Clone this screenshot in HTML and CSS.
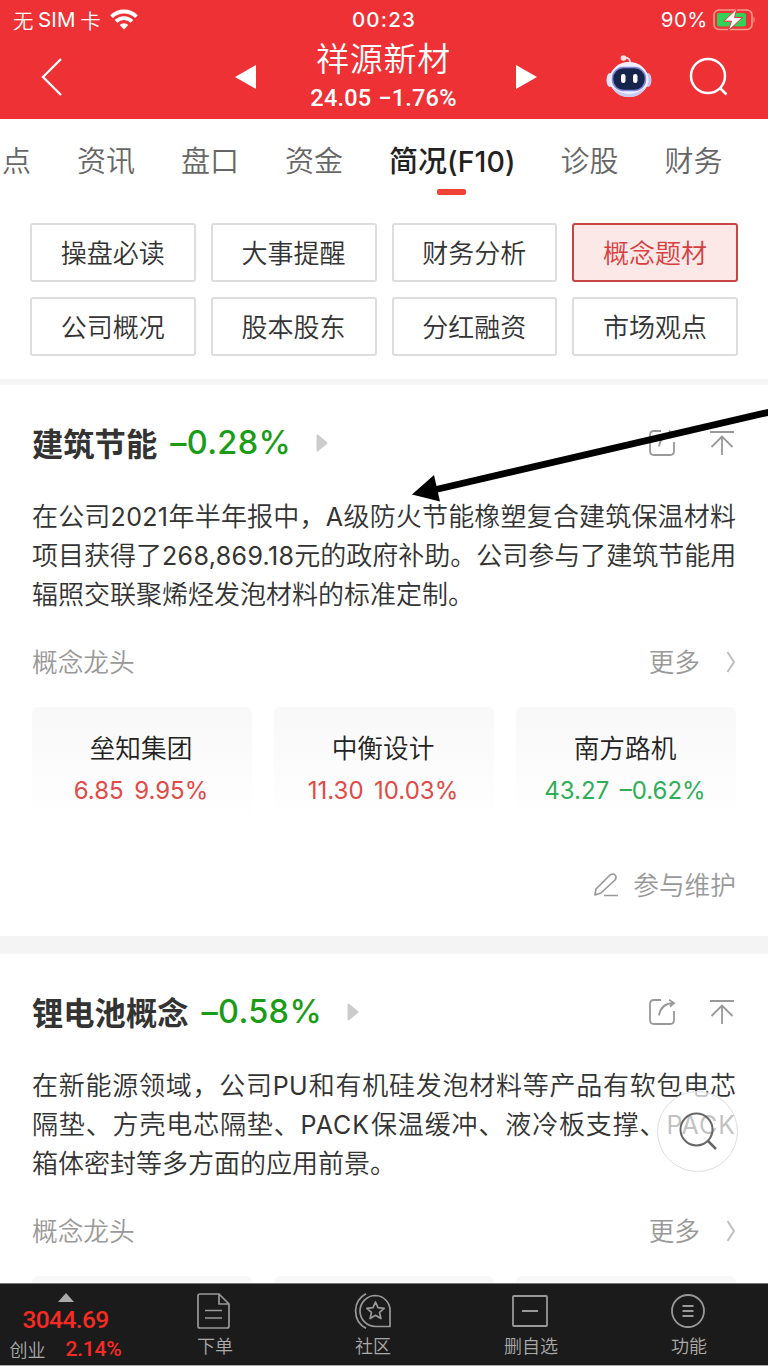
FILE: index.html
```html
<!DOCTYPE html>
<html lang="zh-CN">
<head>
<meta charset="utf-8">
<title>祥源新材</title>
<link rel="stylesheet" href="styles.css">
</head>
<body>
<div class="app">
  <header class="header">
    <div class="status">
      <div class="carrier"><span class="cjk">无</span><span class="sim">SIM</span><span class="cjk">卡</span>
        <svg class="wifi" width="28" height="21" viewBox="0 0 28 21"><g fill="none" stroke="#fff" stroke-width="3.900"><path d="M1.500 7.600a18 18 0 0 1 25 0"/><path d="M6 12.400a11.500 11.500 0 0 1 16 0"/></g><path d="M14 20.500l-4.300-4.400a6.200 6.200 0 0 1 8.600 0z" fill="#fff"/></svg>
      </div>
      <div class="clock">00:23</div>
      <div class="power"><span>90%</span>
        <svg width="42" height="24" viewBox="0 0 42 24"><rect x="1" y="2" width="38" height="19.500" rx="5" fill="none" stroke="#f79a8e" stroke-width="1.600"/><rect x="4" y="5" width="29" height="13.500" rx="2" fill="#34d158"/><path d="M40.500 8.500q2.500 3 0 6.500z" fill="#f79a8e"/><path d="M24 .5L11 13.200h7.500L15 23 29.500 9.500h-8z" fill="#fff" stroke="#ee3135" stroke-width="1"/></svg>
      </div>
    </div>
    <div class="nav">
      <svg class="back" width="24" height="40" viewBox="0 0 24 40"><path d="M21 2L3 20l18 18" fill="none" stroke="#fff" stroke-width="2.300"/></svg>
      <svg class="prev" width="21" height="24" viewBox="0 0 21 24"><path d="M21 0v24L0 12z" fill="#fff"/></svg>
      <div class="stock"><div class="stock-name">祥源新材</div><div class="stock-price"><span>24.05</span><span>−1.76%</span></div></div>
      <svg class="next" width="21" height="24" viewBox="0 0 21 24"><path d="M0 0v24l21-12z" fill="#fff"/></svg>
      <svg class="robot" width="46" height="44" viewBox="0 0 46 44">
        <path d="M24 10q1-6-5-6.500" fill="none" stroke="#f4d9e4" stroke-width="1.800"/><circle cx="17.500" cy="4" r="2.800" fill="#fbe3ea"/>
        <ellipse cx="4" cy="26" rx="3.500" ry="7" fill="#dfe0f8"/><ellipse cx="42" cy="26" rx="3.500" ry="7" fill="#c9c5f0"/>
        <ellipse cx="23" cy="25.500" rx="19.500" ry="17.500" fill="#eef0ff"/><path d="M6 33q17 14 34 0-5 10-17 10T6 33z" fill="#c8cbf3"/>
        <rect x="6.500" y="13.500" width="33" height="23" rx="11" fill="#15254c" stroke="#8588de" stroke-width="1.500"/>
        <rect x="15" y="20" width="4.500" height="9" rx="2.200" fill="#fff"/><rect x="27" y="20" width="4.500" height="9" rx="2.200" fill="#fff"/>
      </svg>
      <svg class="find" width="40" height="40" viewBox="0 0 40 40"><g fill="none" stroke="#fff" stroke-width="2.500"><circle cx="19" cy="19" r="17"/><path d="M30.500 30.500l7 7"/></g></svg>
    </div>
  </header>

  <nav class="tabs"><span>点</span><span>资讯</span><span>盘口</span><span>资金</span><span class="active">简况<i>(F10)</i></span><span>诊股</span><span>财务</span></nav>

  <div class="chips">
    <span>操盘必读</span><span>大事提醒</span><span>财务分析</span><span class="on">概念题材</span>
    <span>公司概况</span><span>股本股东</span><span>分红融资</span><span>市场观点</span>
  </div>

  <section class="concept">
    <div class="title"><h2>建筑节能</h2><b>–0.28%</b><svg class="caret" width="12" height="18" viewBox="0 0 12 18"><path d="M1.500 1.500v15l9-7.500z" fill="#ccc" stroke="#ccc" stroke-width="2" stroke-linejoin="round"/></svg>
      <svg class="tools" width="86" height="26" viewBox="0 0 86 26"><g fill="none" stroke="#999" stroke-width="1.800"><path d="M13 1H6Q2 1 2 5v16q0 4 4 4h16q4 0 4-4v-9M11 16.500Q12.500 5 25 4M21 .8l5 3.200-4 3.500M62 2h24M74 25V6M63.500 17L74 6.500 84.500 17"/></g></svg>
    </div>
    <p class="text"><span>在公司<i>2021</i>年半年报中，<i>A</i>级防火节能橡塑复合建筑保温材料</span><span>项目获得了<i>268,869.18</i>元的政府补助。公司参与了建筑节能用</span><span class="last">辐照交联聚烯烃发泡材料的标准定制。</span></p>
    <div class="leaders"><span>概念龙头</span><span class="more">更多</span><svg width="10" height="22" viewBox="0 0 10 22"><path d="M1.500 1L8 11 1.500 21" fill="none" stroke="#bbb" stroke-width="1.900"/></svg></div>
    <div class="cards">
      <div class="card"><div class="name">垒知集团</div><div class="quote up"><span>6.85</span><span>9.95%</span></div></div>
      <div class="card"><div class="name">中衡设计</div><div class="quote up"><span>11.30</span><span>10.03%</span></div></div>
      <div class="card"><div class="name">南方路机</div><div class="quote down"><span>43.27</span><span>–0.62%</span></div></div>
    </div>
    <div class="maintain"><svg width="26" height="26" viewBox="0 0 26 26"><path d="M2 23l1-6L17 3q3-2 5 0t0 5L8 21l-6 2zM11 23.500h14" fill="none" stroke="#999" stroke-width="1.700" stroke-linejoin="round"/></svg><span>参与维护</span></div>
  </section>

  <section class="concept">
    <div class="title"><h2>锂电池概念</h2><b>–0.58%</b><svg class="caret" width="12" height="18" viewBox="0 0 12 18"><path d="M1.500 1.500v15l9-7.500z" fill="#ccc" stroke="#ccc" stroke-width="2" stroke-linejoin="round"/></svg>
      <svg class="tools" width="86" height="26" viewBox="0 0 86 26"><g fill="none" stroke="#999" stroke-width="1.800"><path d="M13 1H6Q2 1 2 5v16q0 4 4 4h16q4 0 4-4v-9M11 16.500Q12.500 5 25 4M21 .8l5 3.200-4 3.500M62 2h24M74 25V6M63.500 17L74 6.500 84.500 17"/></g></svg>
    </div>
    <p class="text"><span>在新能源领域，公司<i>PU</i>和有机硅发泡材料等产品有软包电芯</span><span>隔垫、方壳电芯隔垫、<i class="caps">PACK</i>保温缓冲、液冷板支撑、<i class="caps">PACK</i></span><span class="last">箱体密封等多方面的应用前景。</span></p>
    <div class="leaders"><span>概念龙头</span><span class="more">更多</span><svg width="10" height="22" viewBox="0 0 10 22"><path d="M1.500 1L8 11 1.500 21" fill="none" stroke="#bbb" stroke-width="1.900"/></svg></div>
    <div class="cards"><div class="card"></div><div class="card"></div><div class="card"></div></div>
  </section>

  <svg class="pointer" width="360" height="100" viewBox="0 0 360 100"><path d="M28 82.500L364 4.500" stroke="#000" stroke-width="6.800"/><path d="M4 87.500l22-19.500 6 26.500z"/></svg>

  <div class="float-search"><svg width="40" height="40" viewBox="0 0 40 40"><g fill="none" stroke="#666" stroke-width="2"><circle cx="17.500" cy="17.500" r="16"/><path d="M28.500 28.500l8.500 8.500" stroke-width="2.500"/></g></svg></div>

  <footer class="bottom">
    <div class="index"><svg width="16" height="9" viewBox="0 0 16 9"><path d="M0 9L8 0l8 9z" fill="#aaa"/></svg><div class="points">3044.69</div><div class="change"><span>创业</span><b>2.14%</b></div></div>
    <div class="item order"><svg width="36" height="36" viewBox="0 0 36 36"><g fill="none" stroke="#999" stroke-width="1.700" stroke-linejoin="round"><path d="M4 1h19l10 10v22q0 2-2 2H4q-2 0-2-2V3q0-2 2-2zM23 1v10h10M9 17.500h17M9 25h17"/></g></svg><span>下单</span></div>
    <div class="item social"><svg width="40" height="36" viewBox="0 0 40 36"><g fill="none" stroke="#999" stroke-width="1.700" stroke-linejoin="round"><path d="M14 .8a19.500 19.500 0 0 0 0 34.500M23.500 2.500A15.500 15.500 0 0 0 23.500 33.500H38V18A15 15 0 0 0 23.500 2.500z"/><path d="M23.500 9l2.500 5.700 6.200.6-4.700 4.100 1.400 6.100-5.400-3.200-5.400 3.200 1.400-6.100-4.700-4.100 6.200-.6z"/></g></svg><span>社区</span></div>
    <div class="item remove"><svg width="36" height="36" viewBox="0 0 36 36"><rect x="1" y="3" width="34" height="30" rx="1" fill="none" stroke="#999" stroke-width="1.800"/><path d="M10 18h16" stroke="#999" stroke-width="2"/></svg><span>删自选</span></div>
    <div class="item func"><svg width="36" height="36" viewBox="0 0 36 36"><circle cx="18" cy="18" r="16" fill="none" stroke="#999" stroke-width="1.800"/><path d="M12.500 13h11M12.500 18h11M12.500 23h11" stroke="#999" stroke-width="2"/></svg><span>功能</span></div>
  </footer>
</div>
</body>
</html>
```

FILE: styles.css
```css
* { box-sizing: border-box; }
body { margin: 0; background: #fff; font-family: "Noto Sans CJK SC DemiLight", "Noto Sans CJK SC", sans-serif; color: #333; }
svg { display: block; flex: none; }
.app { position: relative; width: 768px; height: 1366px; overflow: hidden; background: #fff; font-weight: 350; }

.header { height: 119px; background: #ee3135; color: #fff; }
.status { height: 38px; display: grid; grid-template-columns: 1fr auto 1fr; align-items: center; padding: 0 13px; font-family: Inter, "Noto Sans CJK SC", sans-serif; line-height: 38px; }
.carrier { display: flex; align-items: center; height: 38px; font-size: 20.5px; }
.carrier .cjk { font-size: 20.5px; line-height: 38px; font-family: "Noto Sans CJK SC DemiLight", "Noto Sans CJK SC", sans-serif; }
.sim { margin: 0 4.5px; letter-spacing: .2px; font-weight: 400; }
.wifi { margin-left: 9px; }
.clock { font-weight: 500; font-size: 20.5px; letter-spacing: 1.2px; padding-top: 1px; }
.power { display: flex; align-items: center; justify-content: flex-end; gap: 5px; font-size: 20.5px; letter-spacing: .5px; font-weight: 400; }
.nav { display: flex; height: 81px; }
.back { margin: 19px 0 0 40px; }
.prev { margin: 27px 0 0 171px; }
.stock { width: 260px; padding-right: 5px; text-align: center; }
.stock-name { font-size: 33px; line-height: 38px; letter-spacing: .7px; }
.stock-price { display: flex; justify-content: center; gap: 7px; font: 500 23.5px/44px Roboto, sans-serif; letter-spacing: .2px; }
.next { margin-top: 27px; }
.robot { margin: 16px 0 0 69px; }
.find { margin: 19px 0 0 37px; }

.tabs { height: 104px; padding: 18px 0 0 2px; display: flex; gap: 46px; white-space: nowrap; font-size: 29px; line-height: 44px; color: #666; }
.tabs .active { position: relative; color: #222; font-family: "Noto Sans CJK SC", sans-serif; font-weight: 500; width: 125.5px; }
.tabs i { font-style: normal; font-family: Inter, sans-serif; font-size: 28.5px; letter-spacing: .1px; }
.tabs .active::after { content: ""; position: absolute; left: 48px; top: 52px; width: 29px; height: 6px; border-radius: 2px; background: #ef4136; }

.chips { display: grid; grid-template-columns: repeat(4, 1fr); gap: 15px; height: 162px; padding: 0 30px 23px; grid-auto-rows: 59px; border-bottom: 6px solid #f5f5f5; }
.chips span { border: 2px solid #ddd; border-radius: 3px; text-align: center; font-size: 26px; line-height: 54px; }
.chips .on { background: #fde8e8; border-color: #c94444; color: #d73f3f; }

.concept { padding: 29px 32px 31px; border-bottom: 18px solid #f4f4f4; height: 569px; }
.title { height: 58px; display: flex; align-items: center; }
.title h2 { margin: 0; padding-bottom: 1px; font-family: "Noto Sans CJK SC", sans-serif; font-size: 31.3px; font-weight: 600; line-height: 57px; }
.title b { margin-left: 13px; font: 500 32.5px/58px Inter, sans-serif; color: #1a9c17; letter-spacing: .3px; }
.caret { margin-left: 25px; }
.tools { margin: 0 2.5px 0 auto; }
.text { margin: 23px 0 0; font-size: 26px; line-height: 39px; }
.text span { display: block; height: 39px; white-space: nowrap; text-align: justify; text-align-last: justify; }
.text i { font-style: normal; font-family: Inter, sans-serif; font-size: 25px; line-height: 1; letter-spacing: .35px; font-weight: 400; }
.text .caps { letter-spacing: 1px; }
.text .last { text-align-last: left; }
.leaders { display: flex; align-items: center; height: 40px; margin-top: 30px; color: #999; font-size: 25.7px; }
.leaders span { line-height: 38px; padding-bottom: 2px; }
.more { margin-left: auto; }
.leaders svg { margin-left: 26px; }
.cards { margin-top: 25px; display: grid; grid-template-columns: repeat(3, 1fr); gap: 22px; }
.card { height: 115px; border-radius: 6px; background: linear-gradient(#f8f8f8, #fff); text-align: center; padding: 20px 2px 0 0; }
.name { font-size: 25.7px; line-height: 40px; color: #222; }
.quote { display: flex; justify-content: center; gap: 10.5px; font: 400 24px/48px Inter, sans-serif; }
.up { color: #e04a47; }
.down { color: #2fae57; }
.maintain { display: flex; justify-content: flex-end; align-items: center; gap: 14px; margin-top: 43px; height: 40px; color: #999; font-size: 25.7px; }
.maintain span { line-height: 36px; padding-bottom: 3px; }

.pointer { position: absolute; left: 408px; top: 407px; }
.float-search { position: absolute; left: 657px; top: 1091px; width: 81px; height: 81px; border: 1px solid #ddd; border-radius: 50%; background: rgba(255,255,255,.7); padding: 20px 0 0 21px; }

.bottom { position: absolute; left: 0; right: 0; top: 1283px; height: 83px; background: #1b1b1b; border-top: 1px solid #777; border-bottom: 1px solid #aaa; display: flex; color: #aaa; }
.index { width: 131px; display: flex; flex-direction: column; align-items: center; padding-top: 9px; color: #f72b25; font-family: Roboto, sans-serif; }
.points { font-size: 24.5px; line-height: 28px; font-weight: 500; padding-top: 4px; letter-spacing: -.6px; }
.change { display: flex; gap: 20px; font-size: 21px; line-height: 30px; }
.change span { font: 350 18px/30px "Noto Sans CJK SC DemiLight", "Noto Sans CJK SC", sans-serif; color: #aaa; }
.change b { font-weight: 500; letter-spacing: -.2px; }
.item { display: flex; flex-direction: column; align-items: center; padding-top: 9px; width: 158px; font-size: 18px; line-height: 30px; }
.item span { margin-top: 1px; padding-left: 2px; }
.order { margin-left: 4px; }
```
